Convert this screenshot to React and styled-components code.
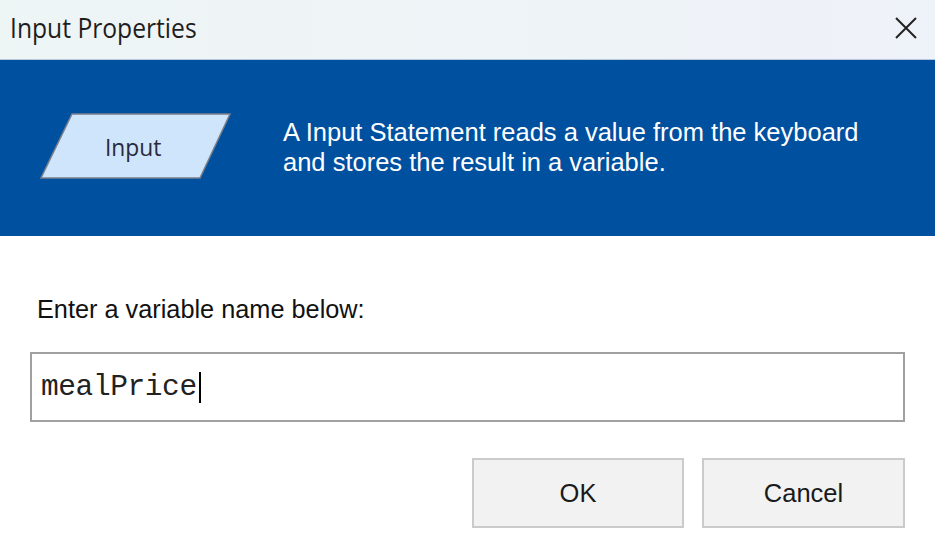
import React from "react";
import styled, { createGlobalStyle } from "styled-components";

const Global = createGlobalStyle`
  html, body { margin: 0; padding: 0; background: #ffffff; }
  body { width: 935px; height: 555px; overflow: hidden; }
`;

const Dialog = styled.div`
  width: 935px;
  height: 555px;
  display: flex;
  flex-direction: column;
  background: #ffffff;
`;

const TitleBar = styled.div`
  height: 60px;
  display: flex;
  align-items: center;
  justify-content: space-between;
  padding: 0 14px 0 10px;
  background: linear-gradient(90deg, #eef5f5 0%, #eef2f9 100%);
  box-sizing: border-box;
  border-bottom: 1px solid #b8c8dc;
`;

const Title = styled.div`
  font-family: "Open Sans", "Noto Sans", sans-serif;
  font-size: 26.5px;
  color: #1e1e1e;
  transform: scaleX(0.93);
  transform-origin: left center;
  margin-top: -4px;
`;

const CloseBtn = styled.div`
  width: 30px;
  height: 30px;
  display: flex;
  align-items: center;
  justify-content: center;
  margin-top: -4px;
`;

const Banner = styled.div`
  height: 176px;
  background: #0050a0;
  display: flex;
  align-items: center;
  padding: 0 0 0 40px;
  box-sizing: border-box;
`;

const ShapeWrap = styled.div`
  position: relative;
  width: 192px;
  height: 66px;
  margin-right: 51px;
  margin-top: -4px;
  flex-shrink: 0;
`;

const ShapeLabel = styled.div`
  position: absolute;
  inset: 0;
  display: flex;
  align-items: center;
  justify-content: center;
  padding-right: 6px;
  font-family: "Open Sans", "Noto Sans", sans-serif;
  font-size: 24px;
  color: #2a2a3a;
  transform: scaleX(0.95);
`;

const Description = styled.div`
  font-family: "Liberation Sans", Arial, sans-serif;
  font-size: 25.5px;
  line-height: 30px;
  color: #ffffff;
  margin-top: -2px;
`;

const Body = styled.div`
  flex: 1;
  display: flex;
  flex-direction: column;
  padding: 60px 30px 0 30px;
`;

const Prompt = styled.div`
  font-family: "Liberation Sans", Arial, sans-serif;
  font-size: 25.3px;
  color: #111;
  padding-left: 7px;
  line-height: 26px;
`;

const InputBox = styled.div`
  margin-top: 30px;
  height: 70px;
  border: 2px solid #a0a0a0;
  box-sizing: border-box;
  display: flex;
  align-items: center;
  padding-left: 9px;
`;

const InputText = styled.span`
  font-family: "Liberation Mono", "Courier New", monospace;
  font-size: 29.5px;
  color: #222;
  letter-spacing: -0.4px;
`;

const Caret = styled.span`
  display: inline-block;
  width: 2px;
  height: 31px;
  background: #000;
  margin-left: 2px;
`;

const ButtonRow = styled.div`
  display: flex;
  justify-content: flex-end;
  gap: 18px;
  margin-top: 36px;
`;

const Button = styled.div`
  width: ${(p) => p.$w}px;
  height: 70px;
  box-sizing: border-box;
  border: 2px solid #cbcbcb;
  background: #f2f2f2;
  display: flex;
  align-items: center;
  justify-content: center;
  font-family: "Liberation Sans", Arial, sans-serif;
  font-size: 25.5px;
  color: #1a1a1a;
`;

export default function App() {
  return (
    <>
      <Global />
      <Dialog>
        <TitleBar>
          <Title>Input Properties</Title>
          <CloseBtn>
            <svg width="24" height="24" viewBox="0 0 24 24">
              <path d="M2 2 L22 22 M22 2 L2 22" stroke="#222" strokeWidth="2" fill="none" />
            </svg>
          </CloseBtn>
        </TitleBar>
        <Banner>
          <ShapeWrap>
            <svg width="192" height="66" viewBox="0 0 192 66">
              <polygon points="32,1 190,1 160,65 1,65" fill="#cfe5fc" stroke="#7a7f8a" strokeWidth="1.5" />
            </svg>
            <ShapeLabel>Input</ShapeLabel>
          </ShapeWrap>
          <Description>
            A Input Statement reads a value from the keyboard
            <br />
            and stores the result in a variable.
          </Description>
        </Banner>
        <Body>
          <Prompt>Enter a variable name below:</Prompt>
          <InputBox>
            <InputText>mealPrice</InputText>
            <Caret />
          </InputBox>
          <ButtonRow>
            <Button $w={212}>OK</Button>
            <Button $w={203}>Cancel</Button>
          </ButtonRow>
        </Body>
      </Dialog>
    </>
  );
}
